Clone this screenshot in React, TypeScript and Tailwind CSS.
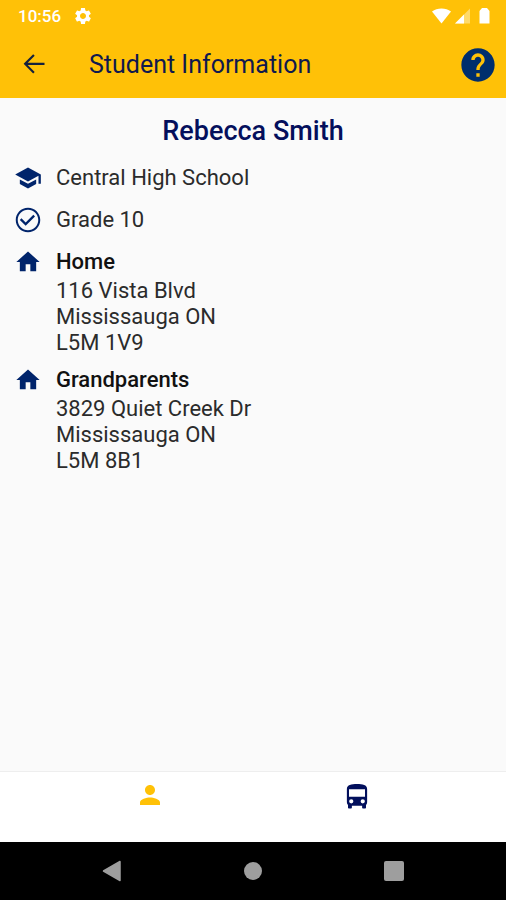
import type { ReactNode } from "react";

const paths = {
  gear: "M19.14 12.94c.04-.3.06-.61.06-.94 0-.32-.02-.64-.07-.94l2.03-1.58c.18-.14.23-.41.12-.61l-1.92-3.32c-.12-.22-.37-.29-.59-.22l-2.39.96c-.5-.38-1.03-.7-1.62-.94l-.36-2.54c-.04-.24-.24-.41-.48-.41h-3.84c-.24 0-.43.17-.47.41l-.36 2.54c-.59.24-1.13.57-1.62.94l-2.39-.96c-.22-.08-.47 0-.59.22L2.74 8.87c-.12.21-.08.47.12.61l2.03 1.58c-.05.3-.09.63-.09.94s.02.64.07.94l-2.03 1.58c-.18.14-.23.41-.12.61l1.92 3.32c.12.22.37.29.59.22l2.39-.96c.5.38 1.03.7 1.62.94l.36 2.54c.05.24.24.41.48.41h3.84c.24 0 .44-.17.47-.41l.36-2.54c.59-.24 1.13-.56 1.62-.94l2.39.96c.22.08.47 0 .59-.22l1.92-3.32c.12-.22.07-.47-.12-.61l-2.01-1.58zM12 15.6c-1.98 0-3.6-1.62-3.6-3.6s1.62-3.6 3.6-3.6 3.6 1.62 3.6 3.6-1.62 3.6-3.6 3.6z",
  back: "M21 10.100H6.600l6-6L11.300 2.800 3.100 11l8.200 8.200 1.300-1.300-6-6H21z",
  help: "M12 2C6.48 2 2 6.48 2 12s4.48 10 10 10 10-4.48 10-10S17.52 2 12 2zm1 17h-2v-2h2v2zm2.07-7.75l-.9.92C13.45 12.9 13 13.5 13 15h-2v-.5c0-1.1.45-2.1 1.17-2.83l1.24-1.26c.37-.36.59-.86.59-1.41 0-1.1-.9-2-2-2s-2 .9-2 2H8c0-2.21 1.79-4 4-4s4 1.79 4 4c0 .88-.36 1.68-.93 2.25z",
  school: "M5 13.18v4L12 21l7-3.82v-4L12 17l-7-3.82zM12 3L1 9l11 6 9-4.91V17h2V9L12 3z",
  check: "M16.59 7.58L10 14.17l-3.59-3.58L5 12l5 5 8-8-1.41-1.42zM12 1.500C6.200 1.500 1.500 6.200 1.500 12s4.700 10.500 10.500 10.500 10.500-4.700 10.500-10.500S17.800 1.500 12 1.500zm0 19.300c-4.860 0-8.800-3.940-8.800-8.800s3.940-8.800 8.800-8.800 8.800 3.940 8.800 8.800-3.940 8.800-8.800 8.800z",
  home: "M10 20v-6h4v6h5v-8h3L12 3 2 12h3v8z",
  person: "M12 12c2.21 0 4-1.79 4-4s-1.79-4-4-4-4 1.79-4 4 1.79 4 4 4zm0 2c-2.67 0-8 1.34-8 4v2h16v-2c0-2.66-5.33-4-8-4z",
  bus: "M12 1.500C7.500 1.500 3.900 2.200 3.900 5.500v10.700c0 .9.300 1.600.9 2.200V20.300c0 .5.400.9.900.9h1.300c.5 0 .9-.4.9-.9V19h8.200v1.300c0 .5.400.9.900.9h1.300c.5 0 .9-.4.9-.9V18.400c.6-.6.9-1.300.9-2.200V5.500C20.100 2.200 16.500 1.500 12 1.500zM7.400 17.100a1.700 1.700 0 1 1 0-3.400 1.700 1.700 0 0 1 0 3.400zm9.200 0a1.700 1.700 0 1 1 0-3.400 1.700 1.700 0 0 1 0 3.400zM18.400 11.700H5.600V5.700h12.800v6z",
};

function Icon({ name, className }: { name: keyof typeof paths; className: string }) {
  return (
    <svg viewBox="0 0 24 24" fill="currentColor" className={`shrink-0 ${className}`} aria-hidden="true">
      <path d={paths[name]} />
    </svg>
  );
}

function StatusBar() {
  return (
    <div className="flex h-8 items-center justify-between pr-4 pl-[18px] text-white">
      <div className="flex items-center gap-3">
        <span className="text-[17px] leading-8 font-medium">10:56</span>
        <Icon name="gear" className="size-5" />
      </div>
      <div className="flex items-center">
        <svg viewBox="0 0 20 16" className="h-4 w-5" fill="currentColor" aria-hidden="true">
          <path d="M10.500 15.500 1 3.500C6-.5 15-.5 20 3.500Z" />
        </svg>
        <svg viewBox="0 0 16 16" className="ml-1 h-4 w-4" fill="currentColor" aria-hidden="true">
          <path d="M0 15.500 15 0.500V15.500Z" opacity="0.4" />
          <path d="M0 15.500 9 6.500V15.500Z" />
        </svg>
        <svg viewBox="0 0 11 16" className="ml-2 h-4 w-[11px]" fill="currentColor" aria-hidden="true">
          <path d="M3 0h5l2.500 3v12.500H0.500V3Z" />
        </svg>
      </div>
    </div>
  );
}

function DetailRow({ icon, children }: { icon: keyof typeof paths; children: ReactNode }) {
  return (
    <li className="flex items-start gap-3.5">
      <Icon name={icon} className="size-7 text-[#00246b]" />
      <div className="min-w-0 flex-1">{children}</div>
    </li>
  );
}

function Address({ label, lines }: { label: string; lines: string[] }) {
  return (
    <DetailRow icon="home">
      <h3 className="leading-7 font-medium text-[#111111]">{label}</h3>
      <address className="mt-0.5 leading-[26px] font-normal not-italic">
        {lines.map((line) => (
          <div key={line}>{line}</div>
        ))}
      </address>
    </DetailRow>
  );
}

export default function App() {
  return (
    <div className="flex min-h-screen flex-col bg-[#fafafa] font-[Roboto,sans-serif] text-[#2b2b2b]">
      <header className="bg-[#ffc107]">
        <StatusBar />
        <div className="flex h-[66px] items-center pr-3 pl-5">
          <button type="button" aria-label="Back" className="text-[#14213d]">
            <Icon name="back" className="size-7" />
          </button>
          <h1 className="ml-[41px] flex-1 text-[25px] leading-8 font-normal text-[#10194e]">Student Information</h1>
          <button type="button" aria-label="Help" className="text-[#002e6d]">
            <Icon name="help" className="-m-1 size-10" />
          </button>
        </div>
      </header>

      <main className="flex-1 px-3.5 pt-[17px]">
        <h2 className="text-center text-[27px] leading-8 font-medium text-[#040f5c]">Rebecca Smith</h2>
        <ul className="mt-[17px] flex flex-col gap-2.5 text-[22px]">
          <DetailRow icon="school">
            <p className="pb-1 leading-7">Central High School</p>
          </DetailRow>
          <DetailRow icon="check">
            <p className="pb-1 leading-7">Grade 10</p>
          </DetailRow>
          <Address label="Home" lines={["116 Vista Blvd", "Mississauga ON", "L5M 1V9"]} />
          <Address label="Grandparents" lines={["3829 Quiet Creek Dr", "Mississauga ON", "L5M 8B1"]} />
        </ul>
      </main>

      <nav className="flex h-[71px] border-t border-[#eeeeee] bg-white px-[46px]">
        <button type="button" aria-label="Student" className="flex flex-1 items-start justify-center pt-2 text-[#ffc107]">
          <Icon name="person" className="size-[30px]" />
        </button>
        <button type="button" aria-label="Bus" className="flex flex-1 items-start justify-center pt-2.5 text-[#020f5c]">
          <Icon name="bus" className="size-[30px]" />
        </button>
      </nav>

      <div className="flex h-[58px] items-center bg-black px-[42px] text-[#9e9e9e]">
        <button type="button" aria-label="System back" className="flex flex-1 justify-center">
          <svg viewBox="0 0 20 22" className="h-[22px] w-5" fill="currentColor" aria-hidden="true">
            <path d="M18 1.500V20.500L1.500 11Z" stroke="currentColor" strokeWidth="1.500" strokeLinejoin="round" />
          </svg>
        </button>
        <button type="button" aria-label="System home" className="flex flex-1 justify-center">
          <span className="size-[18px] rounded-full bg-[#9e9e9e]" />
        </button>
        <button type="button" aria-label="Recent apps" className="flex flex-1 justify-center">
          <span className="size-5 rounded-[2px] bg-[#9e9e9e]" />
        </button>
      </div>
    </div>
  );
}
